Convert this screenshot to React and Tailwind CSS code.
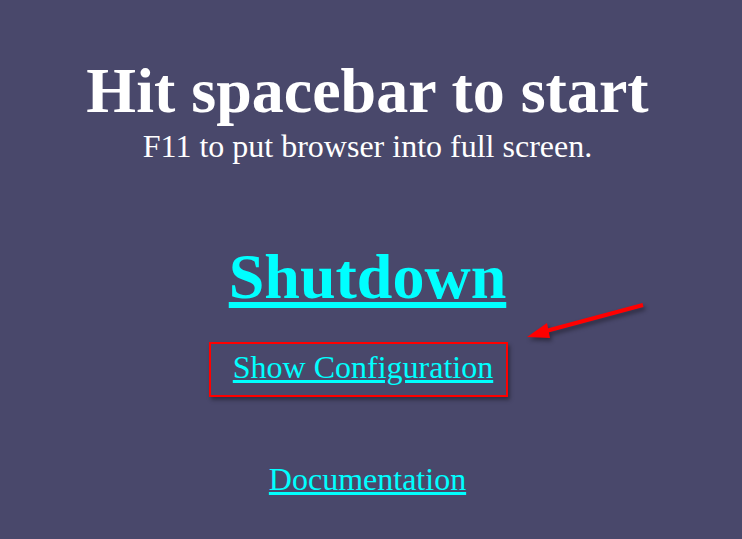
import React from 'react';

// Start screen: title, hint, and the main links (one of them is called out with a red box + arrow)
const App = () => {
  return (
    <div
      className="relative min-h-[539px] w-full bg-[#49486b] flex flex-col items-center pt-[54px] pr-[7px] text-center"
      style={{ fontFamily: '"Liberation Serif", "Times New Roman", serif' }}
    >
      <h1 className="text-[64px] leading-[1.15] font-bold text-white">Hit spacebar to start</h1>
      <p className="text-[32px] leading-[1.15] text-white">F11 to put browser into full screen.</p>

      <a href="#" className="mt-[76px] text-[64px] leading-[1.15] font-bold text-[#00ffff] underline">
        Shutdown
      </a>

      <div className="mt-[28px] ml-[-18px] border-2 border-[#ff0000] pl-[22px] pr-[13px] pt-[5px] pb-[9px] shadow-[2px_3px_4px_rgba(0,0,0,0.35)]">
        <a href="#" className="block text-[32px] leading-[1.15] text-[#00ffff] underline">
          Show Configuration
        </a>
      </div>

      <a href="#" className="mt-[64px] text-[32px] leading-[1.15] text-[#00ffff] underline">
        Documentation
      </a>

      {/* callout arrow */}
      <svg
        className="absolute left-[520px] top-[298px] drop-shadow-[2px_3px_2px_rgba(0,0,0,0.4)]"
        width="130"
        height="46"
        viewBox="0 0 130 46"
      >
        <line x1="123" y1="7" x2="26" y2="33" stroke="#ff0000" strokeWidth="4" strokeLinecap="butt" />
        <polygon points="7,39 27,25 30,40" fill="#ff0000" />
      </svg>
    </div>
  );
};

export default App;
